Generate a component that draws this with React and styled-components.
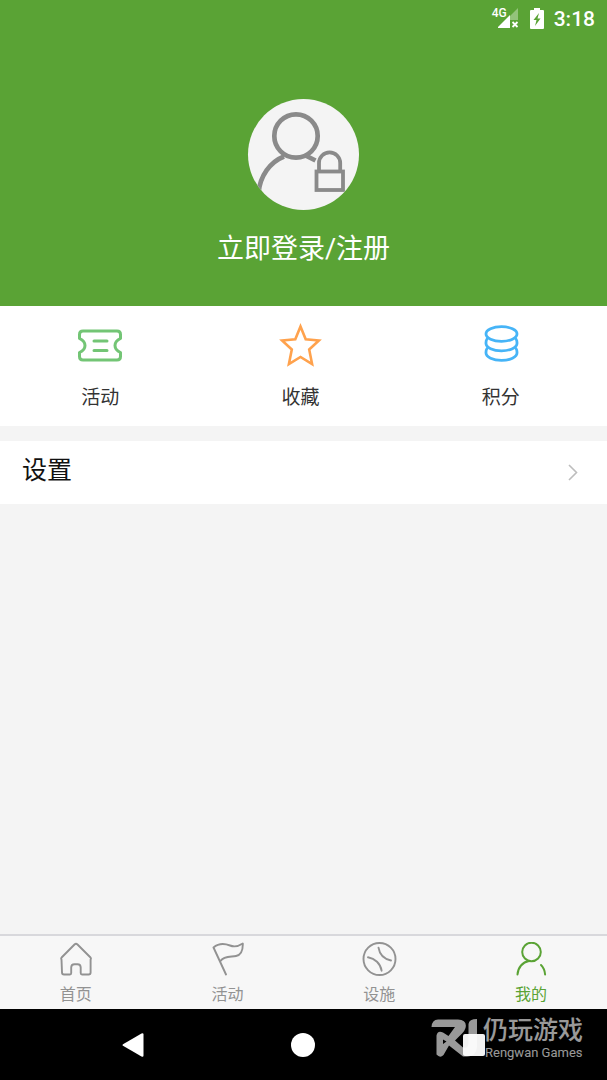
import React from "react";
import styled, { createGlobalStyle } from "styled-components";

const GlobalStyle = createGlobalStyle`
  * {
    box-sizing: border-box;
  }

  body {
    margin: 0;
    background: #f4f4f4;
    font-family: Roboto, "Noto Sans CJK SC", sans-serif;
  }

  button {
    margin: 0;
    padding: 0;
    border: none;
    background: none;
    font-family: inherit;
    cursor: pointer;
  }

  a {
    text-decoration: none;
  }

  svg {
    display: block;
  }
`;

const SignalIcon = () => (
  <svg width="22" height="21" viewBox="0 0 22 21" fill="#fff">
    <path d="M20 0V12H12V8Z" opacity="0.35" />
    <path d="M-1 20 12 7V20Z" />
    <path d="M14.500 14l5 5M19.500 14l-5 5" stroke="#fff" strokeWidth="1.8" />
  </svg>
);

const BatteryIcon = () => (
  <svg width="14" height="21" viewBox="0 0 14 21">
    <path d="M4 0h6v2h3q1 0 1 1v17q0 1-1 1H1q-1 0-1-1V3q0-1 1-1h3z" fill="#fff" />
    <path d="M9 5 3.5 12H6.5L5 18 10.5 10.5H7.5Z" fill="#5aa335" />
  </svg>
);

const AvatarIcon = () => (
  <svg width="111" height="111" viewBox="0 0 111 111" fill="none" stroke="#8a8a8a">
    <circle cx="48" cy="37" r="21.7" strokeWidth="4.7" />
    <path d="M36 57.5C22 63 12 77 10.5 94" strokeWidth="4.7" />
    <path d="M58.5 57 67.5 61.5" strokeWidth="4.7" />
    <path d="M71 72V64a10.6 10.6 0 0 1 21.2 0v8" strokeWidth="3.8" />
    <rect x="68.5" y="72.5" width="26.5" height="18.5" strokeWidth="3.8" />
  </svg>
);

const TicketIcon = () => (
  <svg width="46" height="46" viewBox="0 0 46 46" fill="none" stroke="#73c575" strokeWidth="3" strokeLinecap="round" strokeLinejoin="round">
    <path d="M6 9H40Q43.500 9 43.500 12.500V16.500Q38 19 38 23.500T43.500 30.500V34.500Q43.500 38 40 38H6Q2.500 38 2.500 34.500V30.500Q8 28 8 23.500T2.500 16.500V12.500Q2.500 9 6 9Z" />
    <path d="M17 19H30M17 28.500H30" />
  </svg>
);

const StarIcon = () => (
  <svg width="46" height="46" viewBox="0 0 46 46" fill="none" stroke="#ffa24d" strokeWidth="2.6">
    <path d="M23.500 4.500 28.700 17.200 41.900 18.500 32.200 27.500 35.100 42 23.500 35 11.900 42 14.800 27.500 5.100 18.500 18.300 17.200Z" />
  </svg>
);

const CoinsIcon = () => (
  <svg width="46" height="46" viewBox="0 0 46 46" fill="none" stroke="#46b4f7" strokeWidth="2.8" strokeLinecap="round">
    <ellipse cx="23.500" cy="12" rx="15.500" ry="7.300" />
    <path d="M9 17C7.800 18.500 8 20 8 21.500 8 25.500 15 28.800 23.500 28.800S39 25.500 39 21.500C39 20 39.200 18.500 38 17" />
    <path d="M9 26.500C7.800 28 8 29.500 8 31 8 35 15 38.400 23.500 38.400S39 35 39 31C39 29.500 39.200 28 38 26.500" />
  </svg>
);

const ChevronIcon = () => (
  <svg width="12" height="18" viewBox="0 0 12 18" fill="none" stroke="#bdbdbd" strokeWidth="1.6">
    <path d="M2 1 9.500 8.500 2 16" />
  </svg>
);

const HomeIcon = () => (
  <svg width="36" height="36" viewBox="0 0 36 36" fill="none" stroke="currentColor" strokeWidth="1.9" strokeLinecap="round" strokeLinejoin="round">
    <path d="M16.500 2.500Q18 1.200 19.500 2.500L32.500 15.500Q33.300 16.500 32.600 17.500V30.500Q32.600 32.500 30.600 32.500H24Q22.700 32.500 22.700 31V25.500Q22.700 22.200 19.500 22.200H16.500Q13.200 22.200 13.200 25.500V31Q13.200 32.500 12 32.500H6Q4 32.500 4 30.500L3.500 17.500Q2.800 16.500 3.600 15.500Z" />
  </svg>
);

const FlagIcon = () => (
  <svg width="36" height="36" viewBox="0 0 36 36" fill="none" stroke="currentColor" strokeWidth="1.9" strokeLinecap="round" strokeLinejoin="round">
    <path d="M16 32.500 3.500 5.500C9 .8 15 1.500 20 3.500 25 5.500 29 4 32.800 1.500 33 8 31 13 26 14 21 15 14 13.500 10.500 19" />
  </svg>
);

const BallIcon = () => (
  <svg width="36" height="36" viewBox="0 0 36 36" fill="none" stroke="currentColor" strokeWidth="1.9" strokeLinecap="round">
    <circle cx="18.500" cy="17" r="16" />
    <path d="M17.500 5.700C18.500 12 22.500 17 30 18.500" />
    <path d="M7 15.300C14 16.500 19.500 21.500 20.600 28.700" />
  </svg>
);

const UserIcon = () => (
  <svg width="36" height="36" viewBox="0 0 36 36" fill="none" stroke="currentColor" strokeWidth="2" strokeLinecap="round">
    <circle cx="18.500" cy="10" r="9.300" />
    <path d="M16 19C9.500 20 5 25.500 4.500 32.500" />
    <path d="M28 23C30.500 25.500 31.800 28.500 32.100 32.500" />
  </svg>
);

const WatermarkLogo = () => (
  <svg width="48" height="40" viewBox="3 6 48 40" fill="#fff" fillRule="evenodd">
    <path d="M3.500 15Q4 7.500 10 7.500H30Q39.500 8 37.500 16Q36.500 19 34.500 21L27 28.500 35 35.500Q40.500 37 40.500 31V12Q41 7 49 7V33Q49 44.500 39 44.500H35L21 33.500 15.500 43Q12 46.500 8.500 42.500V23.500Q9.500 18 15 20.500L20.500 24 27 15H3.500ZM15 27.500V32L18.500 29.500Z" />
  </svg>
);

const quickLinks = [
  { label: "活动", Icon: TicketIcon },
  { label: "收藏", Icon: StarIcon },
  { label: "积分", Icon: CoinsIcon },
];

const tabs = [
  { label: "首页", Icon: HomeIcon },
  { label: "活动", Icon: FlagIcon },
  { label: "设施", Icon: BallIcon },
  { label: "我的", Icon: UserIcon, active: true },
];

const App = () => {
  return (
    <Page>
      <GlobalStyle />
      <Header>
        <StatusBar>
          <Network>
            <SignalIcon />
            <NetworkType>4G</NetworkType>
          </Network>
          <BatteryIcon />
          <Clock>3:18</Clock>
        </StatusBar>
        <LoginButton>
          <Avatar>
            <AvatarIcon />
          </Avatar>
          立即登录/注册
        </LoginButton>
      </Header>

      <QuickLinks>
        {quickLinks.map(({ label, Icon }) => (
          <QuickLink key={label} href="#">
            <Icon />
            {label}
          </QuickLink>
        ))}
      </QuickLinks>

      <SettingsRow href="#">
        <SettingsLabel>设置</SettingsLabel>
        <ChevronIcon />
      </SettingsRow>

      <TabBar>
        {tabs.map(({ label, Icon, active }) => (
          <Tab key={label} href="#" $active={active}>
            <Icon />
            {label}
          </Tab>
        ))}
      </TabBar>

      <SystemNav>
        <NavButton aria-label="Back">
          <svg width="22" height="24" viewBox="0 0 22 24" fill="#fff">
            <path d="M1 11.200 19.500.4Q21.500-.4 21.500 1.500V22.500Q21.500 24.400 19.500 23.600L1 12.800Q0 12 1 11.200Z" />
          </svg>
        </NavButton>
        <NavButton aria-label="Home">
          <HomeDot />
        </NavButton>
        <NavButton aria-label="Recent apps">
          <RecentSquare />
        </NavButton>
        <Watermark>
          <WatermarkLogo />
          <WatermarkText>
            <WatermarkName>仍玩游戏</WatermarkName>
            <WatermarkLatin>Rengwan Games</WatermarkLatin>
          </WatermarkText>
        </Watermark>
      </SystemNav>
    </Page>
  );
};

// Styled Components
const Page = styled.div`
  display: flex;
  flex-direction: column;
  min-height: 100vh;
`;

const Header = styled.header`
  display: flex;
  flex-direction: column;
  padding-bottom: 37px;
  background: #5aa335;
`;

const StatusBar = styled.div`
  display: flex;
  align-items: center;
  justify-content: flex-end;
  gap: 10px;
  height: 36px;
  padding-right: 12px;
`;

const Network = styled.div`
  position: relative;
`;

const NetworkType = styled.span`
  position: absolute;
  top: -1px;
  left: -6px;
  color: #fff;
  font-size: 12px;
  font-weight: 500;
  line-height: 12px;
`;

const Clock = styled.time`
  padding-top: 2px;
  color: #fff;
  font-size: 21px;
  font-weight: 500;
  line-height: 24px;
`;

const LoginButton = styled.button`
  display: flex;
  flex-direction: column;
  align-items: center;
  align-self: center;
  gap: 19px;
  margin-top: 63px;
  color: #fff;
  font-size: 27px;
  line-height: 40px;
`;

const Avatar = styled.span`
  width: 111px;
  height: 111px;
  border-radius: 50%;
  background: #f4f4f4;
  overflow: hidden;
`;

const QuickLinks = styled.nav`
  display: flex;
  height: 120px;
  padding-top: 16px;
  background: #fff;
`;

const QuickLink = styled.a`
  display: flex;
  flex: 0 0 33%;
  flex-direction: column;
  align-items: center;
  gap: 16px;
  color: #333;
  font-size: 19px;
  line-height: 28px;
`;

const SettingsRow = styled.a`
  display: flex;
  align-items: center;
  justify-content: space-between;
  margin-top: 15px;
  padding: 12px 28px 11px 22px;
  background: #fff;
  color: #111;
`;

const SettingsLabel = styled.span`
  padding-bottom: 4px;
  font-size: 25px;
  line-height: 36px;
`;

const TabBar = styled.nav`
  display: flex;
  margin-top: auto;
  padding: 6px 0 2px;
  border-top: 2px solid #d8d8dc;
  background: #f7f7f7;
`;

const Tab = styled.a`
  display: flex;
  flex: 1;
  flex-direction: column;
  align-items: center;
  gap: 5px;
  color: ${({ $active }) => ($active ? "#5aa335" : "#929292")};
  font-size: 16px;
  line-height: 24px;
`;

const SystemNav = styled.footer`
  position: relative;
  display: flex;
  height: 71px;
  padding: 0 48px;
  background: #000;
`;

const NavButton = styled.button`
  display: flex;
  flex: 1;
  align-items: center;
  justify-content: center;
`;

const HomeDot = styled.span`
  width: 24px;
  height: 24px;
  border-radius: 50%;
  background: #fff;
`;

const RecentSquare = styled.span`
  width: 22px;
  height: 22px;
  border-radius: 2px;
  background: #f2f2f2;
`;

const Watermark = styled.div`
  position: absolute;
  top: 9px;
  right: 24px;
  display: flex;
  gap: 4px;
  opacity: 0.6;
  color: #fff;
  pointer-events: none;
`;

const WatermarkText = styled.div`
  display: flex;
  flex-direction: column;
`;

const WatermarkName = styled.span`
  font-size: 25px;
  font-weight: 500;
  line-height: 26px;
`;

const WatermarkLatin = styled.span`
  padding-left: 2px;
  font-size: 13px;
  line-height: 18px;
`;

export default App;
